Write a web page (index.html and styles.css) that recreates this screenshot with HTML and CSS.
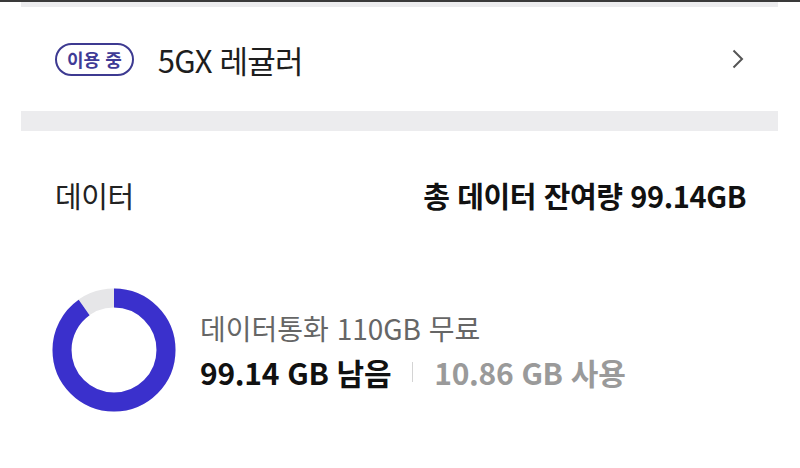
FILE: index.html
```html
<!DOCTYPE html>
<html lang="ko">
<head>
<meta charset="utf-8">
<link rel="stylesheet" href="styles.css">
</head>
<body>
<div class="topline"></div>
<div class="page">
  <div class="band band-top"></div>
  <div class="plan-row">
    <span class="badge">이용 중</span>
    <span class="plan-name">5GX 레귤러</span>
    <svg class="chevron" width="14" height="22" viewBox="0 0 14 22"><path d="M2.5 2.5 L11 11 L2.5 19.5" fill="none" stroke="#555" stroke-width="2"/></svg>
  </div>
  <div class="band band-mid"></div>
  <div class="data-head">
    <span class="data-title">데이터</span>
    <span class="data-total">총 데이터 잔여량 99.14GB</span>
  </div>
  <div class="usage">
    <svg class="donut" width="124" height="124" viewBox="0 0 124 124">
      <circle cx="62" cy="62" r="52" fill="none" stroke="#e6e6e8" stroke-width="19"/>
      <circle cx="62" cy="62" r="52" fill="none" stroke="#3a30cc" stroke-width="19" stroke-dasharray="294.4 400" transform="rotate(-90 62 62)"/>
    </svg>
    <div class="usage-text">
      <div class="usage-plan">데이터통화 110GB 무료</div>
      <div class="usage-amount"><span class="left">99.14 GB 남음</span><span class="sep"></span><span class="used">10.86 GB 사용</span></div>
    </div>
  </div>
</div>
</body>
</html>
```
FILE: styles.css
```css
html, body {
  margin: 0;
  padding: 0;
  background: #ffffff;
  font-family: "Noto Sans CJK KR", "Noto Sans", sans-serif;
  color: #222;
}
.topline {
  height: 2px;
  background: #3a3a3a;
}
.page {
  margin: 0 22px 0 21px;
}
.band {
  background: #ececee;
}
.band-top {
  height: 5px;
}
.band-mid {
  height: 20px;
}
.plan-row {
  height: 104px;
  display: flex;
  align-items: center;
  padding: 0 33px 0 34px;
}
.badge {
  box-sizing: border-box;
  height: 33px;
  padding: 0 10px;
  border: 2px solid #3d3a91;
  border-radius: 17px;
  color: #3f3b96;
  font-size: 18px;
  font-weight: 700;
  line-height: 29px;
}
.plan-name {
  margin-left: 24px;
  font-size: 31px;
  color: #1e1e1e;
  letter-spacing: -0.8px;
  flex: 1;
}
.chevron {
  display: block;
}
.data-head {
  display: flex;
  justify-content: space-between;
  align-items: center;
  padding: 45px 32px 0 34px;
  line-height: 38px;
  font-size: 29px;
  letter-spacing: -0.4px;
}
.data-title {
  color: #222;
}
.data-total {
  font-weight: 700;
  color: #111;
}
.usage {
  display: flex;
  align-items: center;
  margin-top: 74px;
  padding-left: 31px;
}
.donut {
  display: block;
}
.usage-text {
  margin-left: 24px;
  line-height: 44px;
}
.usage-plan {
  color: #666;
  font-size: 28px;
}
.usage-amount {
  display: flex;
  align-items: center;
  font-weight: 700;
  font-size: 30px;
  letter-spacing: -0.3px;
}
.left {
  color: #111;
}
.sep {
  width: 1px;
  height: 20px;
  background: #d4d4d4;
  margin: 0 21px;
}
.used {
  color: #9a9a9a;
  font-weight: 700;
}
```
